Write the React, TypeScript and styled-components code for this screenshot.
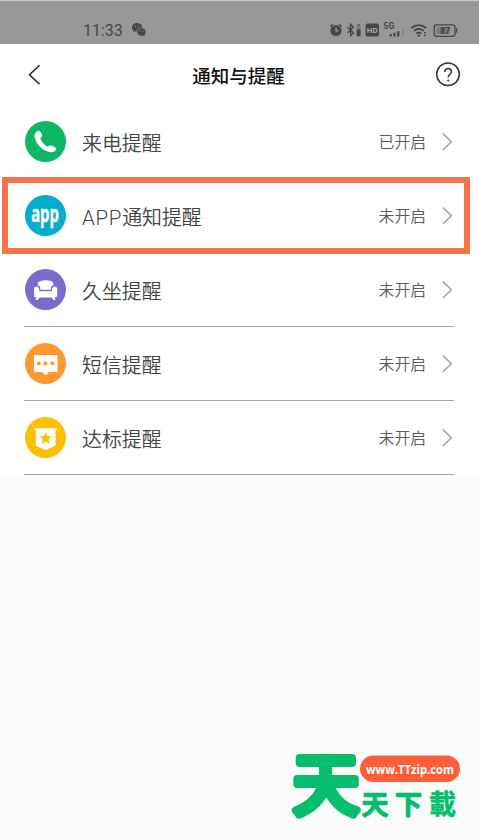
import React from 'react';
import styled, { createGlobalStyle } from 'styled-components';

const GlobalStyle = createGlobalStyle`
  * { box-sizing: border-box; }
  body { margin: 0; background: #fbfbfb; }
`;

const Screen = styled.div`
  position: relative;
  display: flex;
  flex-direction: column;
  width: 479px;
  height: 840px;
  overflow: hidden;
  background: #fbfbfb;
  font-family: 'Noto Sans CJK SC', sans-serif;
`;

const StatusBar = styled.header`
  display: flex;
  align-items: center;
  justify-content: space-between;
  flex: none;
  height: 44px;
  padding: 15px 21px 0 83px;
  border-top: 1px solid #c9cccb;
  background: #989898;
  color: #464646;
`;

const StatusGroup = styled.div<{ $gap: number }>`
  display: flex;
  align-items: center;
  gap: ${(p) => p.$gap}px;
  height: 20px;
`;

const Clock = styled.span`
  padding-top: 1px;
  font: 400 16px/20px Roboto, sans-serif;
`;

const StatusSvg = styled.svg`
  display: block;
  flex: none;
  overflow: visible;
`;

const TitleBar = styled.nav`
  display: grid;
  grid-template-columns: 26px 1fr 26px;
  align-items: center;
  flex: none;
  height: 61px;
  padding: 0 18px 0 27px;
  background: #fff;
`;

const Title = styled.h1`
  margin: 0;
  padding-right: 11px;
  color: #111;
  font-size: 18.5px;
  font-weight: 500;
  line-height: 28px;
  text-align: center;
`;

const IconButton = styled.button<{ $align: string }>`
  display: flex;
  justify-content: ${(p) => p.$align};
  width: 26px;
  padding: 0;
  border: 0;
  background: none;
`;

const List = styled.ul`
  flex: none;
  margin: 0;
  padding: 0 25px 0 24px;
  list-style: none;
  background: #fff;
`;

const Row = styled.li<{ $line: boolean }>`
  position: relative;
  display: flex;
  align-items: center;
  height: 74px;
  padding: 0 1px;
  border-bottom: 1px solid ${(p) => (p.$line ? '#a8a8a8' : '#fff')};
`;

const Badge = styled.span<{ $color: string }>`
  display: flex;
  align-items: center;
  justify-content: center;
  flex: none;
  width: 41px;
  height: 41px;
  border-radius: 50%;
  background: ${(p) => p.$color};
`;

const AppWord = styled.span`
  color: #fff;
  font: 700 22.5px/24px 'Open Sans', sans-serif;
  transform: translateY(-2.5px) scaleX(0.66);
  -webkit-text-stroke: 0.4px #fff;
`;

const Label = styled.span`
  flex: 1;
  margin-left: 16px;
  padding-top: 3px;
  color: #444;
  font-size: 19.9px;
  font-weight: 350;
  line-height: 30px;
`;

const Latin = styled.span`
  font-family: Roboto, sans-serif;
  font-size: 20.5px;
  letter-spacing: 0.7px;
`;

const Value = styled.span`
  margin-right: 16px;
  padding-top: 1px;
  color: #5c5c5c;
  font-size: 15.8px;
  font-weight: 350;
  line-height: 24px;
`;

const Highlight = styled.div`
  position: absolute;
  left: -22px;
  top: -2px;
  width: 468px;
  height: 77px;
  border: 6px solid #f37447;
  pointer-events: none;
`;

const Watermark = styled.svg`
  position: absolute;
  left: 280px;
  top: 720px;
`;

const PhoneIcon = () => (
  <svg width="41" height="41" viewBox="0 0 41 41">
    <path
      fill="#fff"
      d="M12.2 10.2c1.100-.8 2.700-.5 3.500.7l1.200 2.600c.5 1 .2 1.900-.5 2.700l-1 1.300c.6 3 4.300 6.900 7.400 8l2-.9c.7-.3 1.500-.2 2.200.2l3.200 1.700c1.200.7 1.200 1.800.6 2.700-1.300 2-4.400 2.500-7.600 1.500C16.500 28.800 11 23 9.600 16c-.5-2.700.7-4.600 2.600-5.800z"
    />
  </svg>
);

const SofaIcon = () => (
  <svg width="41" height="41" viewBox="0 0 41 41" fill="#fff">
    <path d="M12.800 16.300v-1.200c0-1.600 1-2.700 2.400-2.800 3-1.400 7.800-1.400 10.800 0 1.400.1 2.400 1.200 2.400 2.800v1.200c-1.700.4-2.500 1.500-2.500 3.200v1.300H15.300v-1.300c0-1.700-.8-2.800-2.500-3.200z" />
    <path d="M11.300 17.500c1.700 0 2.900 1.200 2.900 2.800v2h12.800v-2c0-1.600 1.200-2.800 2.900-2.800 1.400 0 2.300 1 2.300 2.400v6.600c0 1.200-.8 2-2 2h-.6l1 2.400h-2.300l-1.600-2.400H14.500l-1.600 2.400h-2.300l1-2.400H11c-1.200 0-2-.8-2-2v-6.600c0-1.400.9-2.400 2.300-2.400z" />
  </svg>
);

const MessageIcon = () => (
  <svg width="41" height="41" viewBox="0 0 41 41">
    <path fill="#fff" d="M10 12h21.500c.7 0 1 .4 1 1v15c0 .7-.4 1-1 1h-7.200L20.800 32.300 17.200 29H10c-.7 0-1-.4-1-1V13c0-.7.4-1 1-1z" />
    <g fill="#ff982e">
      <circle cx="13.800" cy="20.400" r="1.900" />
      <circle cx="20.600" cy="20.400" r="1.900" />
      <circle cx="27.400" cy="20.400" r="1.900" />
    </g>
  </svg>
);

const MedalIcon = () => (
  <svg width="41" height="41" viewBox="0 0 41 41">
    <path fill="#fff" d="M9.700 11.200h22v2h-1.200v14.600c0 .6-.3 1-.8 1.200L20.700 33l-9.100-4c-.5-.2-.8-.6-.8-1.200V13.200H9.700z" />
    <path
      fill="#fcc002"
      d="m20.700 15 1.800 4.100 4.500.4-3.400 3 1 4.400-3.900-2.300-3.900 2.300 1-4.400-3.400-3 4.500-.4z"
    />
  </svg>
);

const ChevronRight = () => (
  <svg width="11" height="18" viewBox="0 0 11 18" fill="none" stroke="#a3a3a3" strokeWidth="1.500">
    <path d="m.8.6 8.600 8.200-8.600 8.200" />
  </svg>
);

const WeChatIcon = () => (
  <StatusSvg width="14" height="14" viewBox="0 0 14 14">
    <path fill="#464646" d="M5 0c2.800 0 5 1.800 5 4.200v.5C7 4.500 4.500 6 4.500 8.500c-.7 0-1.300 0-1.900-.2L1 9.200l.4-1.600C.5 6.800 0 5.700 0 4.400 0 1.900 2.200 0 5 0z" />
    <path fill="#464646" d="M9.500 5.300c2.500 0 4.300 1.600 4.300 3.800 0 1.100-.6 2.100-1.400 2.800l.3 1.400-1.500-.7c-3 .8-6-.7-6-3.500 0-2.200 1.800-3.800 4.300-3.800z" />
    <g fill="#888">
      <circle cx="3.400" cy="3.200" r=".7" />
      <circle cx="6.700" cy="3.200" r=".7" />
      <circle cx="8" cy="8.200" r=".65" />
      <circle cx="11" cy="8.200" r=".65" />
    </g>
  </StatusSvg>
);

/* Alarm, bluetooth, HD, signal, wifi and battery indicators */
const Indicators = () => (
  <StatusSvg width="128" height="20" viewBox="0 0 128 20" fill="#464646">
    <circle cx="6" cy="10.500" r="5.600" />
    <path d="M.2 6.600 2.900 4.300M11.800 6.600 9.100 4.300" stroke="#464646" strokeWidth="1.300" />
    <path d="M6 7.400v3.500h2.700" fill="none" stroke="#a4a4a4" strokeWidth="1.200" />
    <path d="m17.500 7 6 6-2.900 2.700V4.300L23.500 7l-6 6" fill="none" stroke="#464646" strokeWidth="1.300" />
    <rect x="26.700" y="5.200" width="3.800" height="11" fill="#777" />
    <path d="M26.700 9.500h3.800v6.700h-3.800zM27.700 4h1.800v1.200h-1.800z" />
    <rect x="35.500" y="3.500" width="13.500" height="13" rx="2" />
    <text x="42.250" y="13" textAnchor="middle" fontFamily="Roboto" fontWeight="700" fontSize="8" fill="#a8a8a8">HD</text>
    <text x="53.500" y="9.200" fontFamily="Roboto" fontWeight="700" fontSize="8.500">5G</text>
    <path d="M59.500 14h2.300v2.500h-2.300zM63.300 12.700h2.300v3.800h-2.300zM67.100 11.200h2.300v5.300h-2.300z" />
    <path d="M72.300 9h1.700v7.500h-1.700z" fill="#858585" />
    <g fill="none" stroke="#464646" strokeWidth="1.900">
      <path d="M81.500 8c4.100-3.800 10.500-3.800 14.600 0" />
      <path d="M84 10.900c2.800-2.600 6.800-2.600 9.600 0" />
      <path d="M86.400 13.500c1.300-1.200 3.500-1.200 4.800 0" />
    </g>
    <circle cx="88.800" cy="15.600" r="1.200" />
    <path d="M94 12h1.700v1.600H94zM94 14.700h1.700v1.600H94z" />
    <rect x="104.200" y="4.800" width="20.800" height="11.500" rx="2.500" fill="none" stroke="#464646" strokeWidth="1.300" />
    <rect x="106.300" y="7" width="13.500" height="7" fill="#7c7c7c" />
    <path d="M126 8.300h1.300v4.500H126z" />
    <text x="115.200" y="13.500" textAnchor="middle" fontFamily="Roboto" fontWeight="700" fontSize="8.500" fill="#3c3c3c">87</text>
  </StatusSvg>
);

const items = [
  { label: '来电提醒', value: '已开启', color: '#0cb863', icon: <PhoneIcon />, line: false },
  {
    latin: 'APP',
    label: '通知提醒',
    value: '未开启',
    color: '#05accd',
    icon: <AppWord>app</AppWord>,
    line: false,
    active: true,
  },
  { label: '久坐提醒', value: '未开启', color: '#7c6bcb', icon: <SofaIcon />, line: true },
  { label: '短信提醒', value: '未开启', color: '#ff982e', icon: <MessageIcon />, line: true },
  { label: '达标提醒', value: '未开启', color: '#fcc002', icon: <MedalIcon />, line: true },
];

export default function App() {
  return (
    <Screen>
      <GlobalStyle />
      <StatusBar>
        <StatusGroup $gap={9}>
          <Clock>11:33</Clock>
          <WeChatIcon />
        </StatusGroup>
        <StatusGroup $gap={0}>
          <Indicators />
        </StatusGroup>
      </StatusBar>
      <TitleBar>
        <IconButton $align="flex-start" aria-label="返回">
          <svg width="14" height="22" viewBox="0 0 14 22" fill="none" stroke="#222" strokeWidth="1.500">
            <path d="M12.500 1.200 2.500 10.700l10 9.500" />
          </svg>
        </IconButton>
        <Title>通知与提醒</Title>
        <IconButton $align="flex-end" aria-label="帮助">
          <svg width="26" height="26" viewBox="0 0 26 26" fill="none" stroke="#333" strokeWidth="1.500">
            <circle cx="13" cy="12.200" r="11.300" />
            <path d="M9.800 9.900c0-2 1.300-3.400 3.300-3.400s3.300 1.300 3.300 3.100c0 2.600-3.200 2.700-3.200 5.800" strokeWidth="1.600" />
            <circle cx="13.200" cy="18.500" r="1.100" fill="#333" stroke="none" />
          </svg>
        </IconButton>
      </TitleBar>
      <List>
        {items.map((item) => (
          <Row key={item.label} $line={item.line}>
            <Badge $color={item.color}>{item.icon}</Badge>
            <Label>
              {item.latin && <Latin>{item.latin}</Latin>}
              {item.label}
            </Label>
            <Value>{item.value}</Value>
            <ChevronRight />
            {item.active && <Highlight />}
          </Row>
        ))}
      </List>
      <Watermark width="199" height="120" viewBox="0 -20 199 120">
        <g
          fill="#06be6d"
          stroke="#06be6d"
          strokeLinejoin="round"
          fontFamily="'Noto Sans CJK SC', sans-serif"
        >
          <text x="13" y="68.500" fontSize="66" fontWeight="400" strokeWidth="8">天</text>
          <text x="82" y="73.500" fontSize="26" fontWeight="400" strokeWidth="2.400">天</text>
          <text x="115.500" y="73.500" fontSize="26" fontWeight="400" strokeWidth="2.400">下</text>
          <text x="149" y="74" fontSize="27" fontWeight="700" strokeWidth="0.500">載</text>
        </g>
        <rect x="80" y="15.500" width="100" height="26.500" rx="13.250" fill="#ff5f38" />
        <text x="130" y="34" textAnchor="middle" textLength="88" lengthAdjust="spacingAndGlyphs" fill="#fff" fontFamily="'Open Sans', sans-serif" fontWeight="700" fontSize="13">
          www.TTzip.com
        </text>
      </Watermark>
    </Screen>
  );
}
